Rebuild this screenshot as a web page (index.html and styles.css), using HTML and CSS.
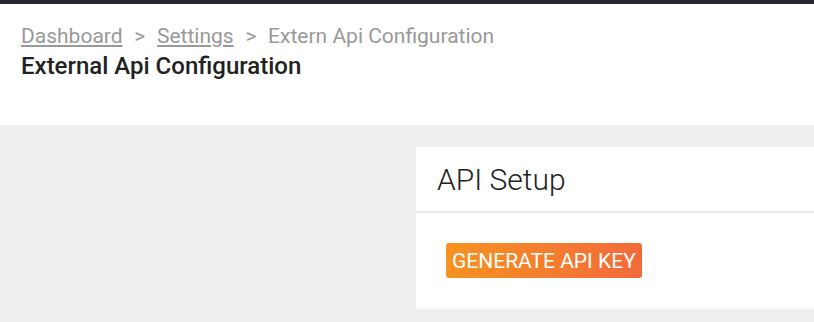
FILE: index.html
```html
<!DOCTYPE html>
<html lang="en">
<head>
    <meta charset="UTF-8">
    <meta name="viewport" content="width=device-width, initial-scale=1.0">
    <title>External Api Configuration</title>
    <link rel="stylesheet" href="styles.css">
</head>
<body>
    <div class="topbar"></div>
    <div class="page-header">
        <div class="breadcrumb">
            <a href="#">Dashboard</a>
            <span class="sep">&gt;</span>
            <a href="#">Settings</a>
            <span class="sep">&gt;</span>
            <span>Extern Api Configuration</span>
        </div>
        <h1>External Api Configuration</h1>
    </div>
    <div class="content">
        <div class="side"></div>
        <div class="card">
            <div class="card-header">API Setup</div>
            <div class="card-body">
                <button class="btn-generate">Generate API Key</button>
            </div>
        </div>
    </div>
</body>
</html>
```

FILE: styles.css
```css
body {
    margin: 0;
    font-family: Roboto, "Liberation Sans", sans-serif;
    background-color: #f0eeef;
    overflow: hidden;
}
.topbar {
    height: 4px;
    background-color: #25252f;
}
.page-header {
    background-color: white;
    height: 121px;
    padding: 19px 21px 0;
    box-sizing: border-box;
}
.breadcrumb {
    font-size: 21px;
    color: #999;
    line-height: 26px;
}
.breadcrumb a {
    color: #999;
}
.breadcrumb .sep {
    margin: 0 6.5px;
}
h1 {
    margin: 3px 0 0;
    font-size: 24px;
    font-weight: 500;
    color: #222;
    line-height: 28px;
}
.content {
    display: grid;
    grid-template-columns: 416px 1fr;
    padding-top: 22px;
}
.card {
    background-color: white;
    height: 162px;
}
.card-header {
    height: 66px;
    box-sizing: border-box;
    padding: 15px 21px 0;
    font-size: 30px;
    font-weight: 300;
    color: #222;
    line-height: 36px;
    border-bottom: 2px solid #ebebeb;
}
.card-body {
    padding: 30px 30px;
}
.btn-generate {
    font-family: inherit;
    font-size: 21px;
    text-transform: uppercase;
    color: white;
    border: none;
    border-radius: 3px;
    height: 35px;
    padding: 0 6px;
    background: linear-gradient(to right, #f7921f, #f26a3c);
}
```
